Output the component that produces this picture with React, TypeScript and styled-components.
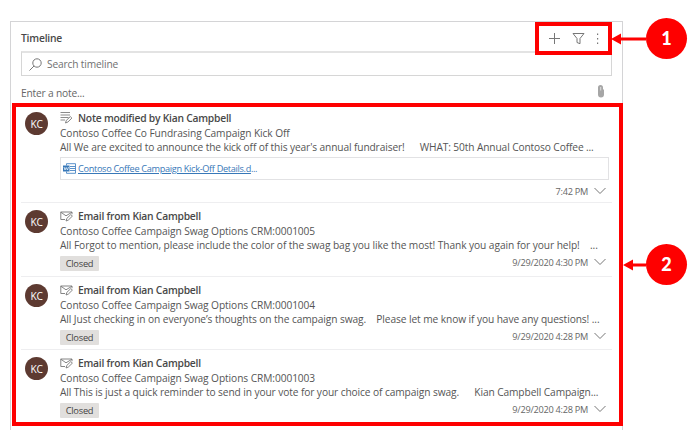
import React from 'react';
import styled, { createGlobalStyle } from 'styled-components';

const Global = createGlobalStyle`
  * { box-sizing: border-box; }
  body { margin: 0; background: #fff; font-family: "Open Sans", "Noto Sans", sans-serif; }
  svg { display: block; flex: none; }
`;

const Stage = styled.main`
  position: relative;
  width: 694px;
  height: 438px;
  padding: 21px 0 0 10px;
  overflow: hidden;
`;

const Panel = styled.section`
  width: 613px;
  height: 409px;
  border: 1px solid #d4d4d6;
  border-bottom: 0;
  padding: 0 10px;
  display: flex;
  flex-direction: column;
`;

const Header = styled.header`
  height: 29px;
  flex: none;
  display: flex;
  align-items: center;
  justify-content: space-between;
  padding: 3px 13px 0 0;
`;

const Label = styled.span<{ $size: number; $track?: number; $weight?: number; $color?: string }>`
  font-size: ${p => p.$size}px;
  letter-spacing: ${p => p.$track ?? 0}px;
  font-weight: ${p => p.$weight ?? 400};
  color: ${p => p.$color ?? '#555'};
  white-space: pre;
`;

const Tools = styled.div`
  display: flex;
  align-items: center;
  gap: 11px;
`;

const Search = styled.div`
  height: 25px;
  flex: none;
  width: 591px;
  border: 1px solid #d6d6d6;
  border-top: 2px solid #e3e3e3;
  display: flex;
  align-items: center;
  gap: 5px;
  padding-left: 7px;
`;

const NoteEntry = styled.div`
  height: 31px;
  flex: none;
  display: flex;
  align-items: center;
  justify-content: space-between;
  padding: 3px 7px 0 0;
`;

const ClipSlot = styled.span`
  align-self: flex-start;
  padding-top: 5px;
`;

const List = styled.div`
  display: flex;
  flex-direction: column;
  width: 591px;
`;

const Avatar = styled.div`
  width: 23px;
  height: 23px;
  border-radius: 50%;
  background: #5d3a31;
  color: #fff;
  font-size: 10.2px;
  letter-spacing: -0.3px;
  display: grid;
  place-items: center;
  flex: none;
`;

const Content = styled.div`
  flex: 1;
  min-width: 0;
`;

const Row = styled.article<{ $note: boolean; $height: number }>`
  height: ${p => p.$height}px;
  flex: none;
  display: flex;
  gap: 12px;
  padding-left: 4px;
  & + & { border-top: 1px solid #eeeef0; }
  ${Avatar} { margin-top: ${p => (p.$note ? 5 : 7)}px; }
  ${Content} { padding-top: ${p => (p.$note ? 3 : 5)}px; }
`;

const Line = styled.div<{ $height: number }>`
  height: ${p => p.$height}px;
  display: flex;
  align-items: center;
  gap: 5px;
`;

const Attachment = styled.div`
  width: 549px;
  height: 23px;
  margin-top: 3px;
  border: 1px solid #e2e2e4;
  display: flex;
  align-items: center;
  gap: 2px;
  padding-left: 2px;
`;

const FileLink = styled.a`
  color: #3878b8;
  font-size: 9.2px;
  white-space: pre;
  letter-spacing: -0.33px;
`;

const LinkText = styled.span`
  text-decoration: underline;
`;

const Footer = styled.div<{ $height: number }>`
  height: ${p => p.$height}px;
  display: flex;
  align-items: center;
  justify-content: space-between;
  padding-right: 6px;
`;

const Badge = styled.span`
  width: 39px;
  height: 15px;
  margin-top: 3px;
  border-radius: 1px;
  background: #e1dfdd;
  display: grid;
  place-items: center;
  font-size: 9.3px;
  color: #444;
  letter-spacing: -0.25px;
`;

const Time = styled.div`
  margin-left: auto;
  display: flex;
  align-items: center;
  gap: 6px;
`;

const Outline = styled.div<{ $x: number; $y: number; $w: number; $h: number }>`
  position: absolute;
  left: ${p => p.$x}px;
  top: ${p => p.$y}px;
  width: ${p => p.$w}px;
  height: ${p => p.$h}px;
  border: 4px solid #fe0000;
`;

const Callout = styled.div<{ $x: number; $y: number }>`
  position: absolute;
  left: ${p => p.$x}px;
  top: ${p => p.$y}px;
  display: flex;
  align-items: center;
`;

const Disc = styled.span`
  width: 41px;
  height: 41px;
  border-radius: 50%;
  background: #fe0000;
  color: #fff;
  font-family: Lato, "Open Sans", sans-serif;
  font-size: 18px;
  font-weight: 900;
  display: grid;
  place-items: center;
  line-height: 1;
  padding-bottom: 1px;
`;

const Arrow = ({ length }: { length: number }) => (
  <svg width={length} height="12" viewBox={`0 0 ${length} 12`}>
    <path d={`M0 6 10 .5V4.5H${length}V7.5H10V11.5Z`} fill="#fe0000" />
  </svg>
);

const Chevron = () => (
  <svg width="12" height="8" viewBox="0 0 12 8" fill="none" stroke="#777" strokeWidth="1">
    <path d="M.5 1 6 6.5 11.5 1" />
  </svg>
);

const NoteIcon = () => (
  <svg width="13" height="13" viewBox="0 0 13 13" fill="none">
    <path d="M.5 1.5H10M.5 4H10M.5 6.5H8.5M.5 9H5" stroke="#8c8c8c" />
    <path d="m5.500 12 .8-2.600 4-3.800 1.600 1.500-4 3.900Z" stroke="#777" strokeWidth=".9" />
  </svg>
);

const MailIcon = () => (
  <svg width="13" height="12" viewBox="0 0 13 12" fill="none" stroke="#777" strokeWidth=".9">
    <path d="M5 9.500H.8V2H12v2.200M.8 2.200 6 5.800 12 2.200" />
    <path d="m6 11 .8-2.600 4-3.800 1.600 1.500-4 3.900Z" />
  </svg>
);

const WordIcon = () => (
  <svg width="13" height="11" viewBox="0 0 13 11">
    <path d="M3.500 2.500V.7h9v9.600h-9V8.500M7 3.500h5.500M7 5.500h5.500M7 7.500h5.500" fill="none" stroke="#4a86c4" strokeWidth=".9" />
    <path d="M0 2.500h6.500v6H0Z" fill="#3878b8" />
    <path d="m1 4 1 3 1.200-2.500L4.500 7l1-3" fill="none" stroke="#fff" strokeWidth=".7" />
  </svg>
);

type Entry = {
  kind: 'note' | 'mail';
  height: number;
  title: string;
  subject: string;
  body: string;
  track: number;
  time: string;
};

const entries: Entry[] = [
  { kind: 'note', height: 95, title: 'Note modified by Kian Campbell', subject: 'Contoso Coffee Co Fundrasing Campaign Kick Off', body: "All We are excited to announce the kick off of this year's annual fundraiser!      WHAT: 50th Annual Contoso Coffee ...", track: -0.12, time: '7:42 PM' },
  { kind: 'mail', height: 74, title: 'Email from Kian Campbell', subject: 'Contoso Coffee Campaign Swag Options CRM:0001005', body: 'All Forgot to mention, please include the color of the swag bag you like the most! Thank you again for your help!    ...', track: -0.08, time: '9/29/2020 4:30 PM' },
  { kind: 'mail', height: 73, title: 'Email from Kian Campbell', subject: 'Contoso Coffee Campaign Swag Options CRM:0001004', body: 'All Just checking in on everyone\u2019s thoughts on the campaign swag.    Please let me know if you have any questions! ...', track: -0.09, time: '9/29/2020 4:28 PM' },
  { kind: 'mail', height: 74, title: 'Email from Kian Campbell', subject: 'Contoso Coffee Campaign Swag Options CRM:0001003', body: 'All This is just a quick reminder to send in your vote for your choice of campaign swag.      Kian Campbell Campaign...', track: -0.1, time: '9/29/2020 4:28 PM' },
];

const TimelineRow = ({ entry }: { entry: Entry }) => (
  <Row $note={entry.kind === 'note'} $height={entry.height}>
    <Avatar>KC</Avatar>
    <Content>
      <Line $height={15}>
        {entry.kind === 'note' ? <NoteIcon /> : <MailIcon />}
        <Label $size={10.3} $track={-0.23} $weight={600} $color="#484848">{entry.title}</Label>
      </Line>
      <Line $height={15}><Label $size={10.2} $track={-0.08}>{entry.subject}</Label></Line>
      <Line $height={14}><Label $size={10.2} $track={entry.track}>{entry.body}</Label></Line>
      {entry.kind === 'note' && (
        <Attachment>
          <WordIcon />
          <FileLink><LinkText>Contoso Coffee Campaign Kick-Off Details.d</LinkText>...</FileLink>
        </Attachment>
      )}
      <Footer $height={entry.kind === 'note' ? 22 : 20}>
        {entry.kind === 'mail' && <Badge>Closed</Badge>}
        <Time><Label $size={9.2} $track={-0.27} $color="#666">{entry.time}</Label><Chevron /></Time>
      </Footer>
    </Content>
  </Row>
);

export default function App() {
  return (
    <Stage>
      <Global />
      <Panel>
        <Header>
          <Label $size={10.3} $track={-0.2} $weight={600} $color="#484848">Timeline</Label>
          <Tools>
            <svg width="14" height="14" viewBox="0 0 14 14" stroke="#777" fill="none"><path d="M7.500 2v11M2 7.500h11" /></svg>
            <svg width="13" height="13" viewBox="0 0 13 13" stroke="#777" fill="none"><path d="M1 1.500h11L8 6.500v5.200l-3-1.200v-4Z" /></svg>
            <svg width="3" height="13" viewBox="0 0 3 13" fill="#777"><path d="M1 1.500h1.200v1.600H1zM1 6h1.200v1.600H1zM1 10.500h1.200v1.600H1z" /></svg>
          </Tools>
        </Header>
        <Search>
          <svg width="13" height="13" viewBox="0 0 13 13" stroke="#777" fill="none"><circle cx="8" cy="5" r="4.200" /><path d="M5 8 .5 12.500" /></svg>
          <Label $size={10.2} $track={-0.15} $color="#707070">Search timeline</Label>
        </Search>
        <NoteEntry>
          <Label $size={10.2} $track={-0.18} $color="#666">Enter a note...</Label>
          <ClipSlot>
            <svg width="8" height="14" viewBox="0 0 8 14"><path d="M1 3.500a2.500 2.500 0 0 1 5 0V5l1 1v4.500a3 3 0 0 1-6 0Z" fill="#a6a6a6" /><path d="M3.700 3v3.500" stroke="#eee" strokeWidth=".8" /></svg>
          </ClipSlot>
        </NoteEntry>
        <List>{entries.map(e => <TimelineRow key={e.subject} entry={e} />)}</List>
      </Panel>
      <Outline $x={535} $y={22} $w={77} $h={33} />
      <Outline $x={12} $y={103} $w={611} $h={323} />
      <Callout $x={611} $y={18}><Arrow length={35} /><Disc>1</Disc></Callout>
      <Callout $x={623} $y={244}><Arrow length={23} /><Disc>2</Disc></Callout>
    </Stage>
  );
}
